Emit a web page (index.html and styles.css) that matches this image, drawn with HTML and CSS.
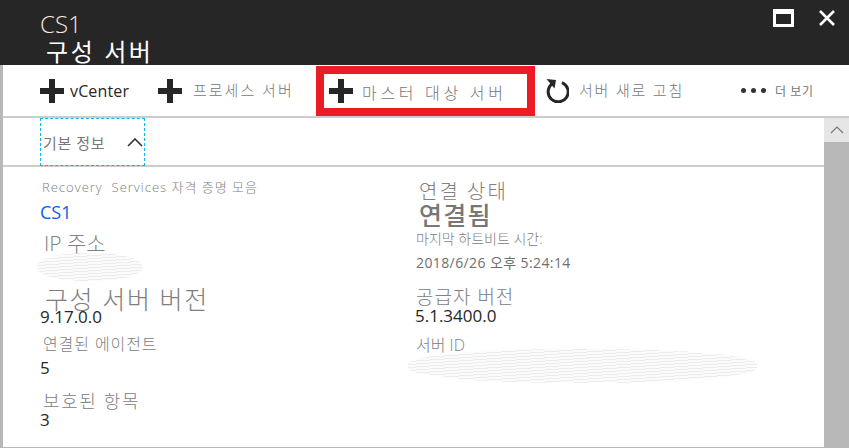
FILE: index.html
```html
<!DOCTYPE html>
<html lang="ko">
<head>
  <meta charset="UTF-8">
  <title>CS1 구성 서버</title>
  <link rel="stylesheet" href="styles.css">
</head>
<body>

  <div class="blade">
    <header class="blade-header">
      <div class="titles">
        <div class="title">CS1</div>
        <div class="subtitle">구성 서버</div>
      </div>
      <div class="window-buttons">
        <span class="btn-max"></span>
        <svg class="btn-close" width="18" height="18" viewBox="0 0 18 18">
          <path d="M2 2 L16 16 M16 2 L2 16" stroke="#fff" stroke-width="2.6" fill="none"/>
        </svg>
      </div>
    </header>

    <nav class="toolbar">
      <div class="tool tool-vcenter">
        <svg class="plus" width="24" height="24" viewBox="0 0 24 24"><path d="M9 0h6v9h9v6h-9v9H9v-9H0V9h9z" fill="#262626"/></svg>
        <span class="tool-en">vCenter</span>
      </div>
      <div class="tool tool-process">
        <svg class="plus" width="24" height="24" viewBox="0 0 24 24"><path d="M9 0h6v9h9v6h-9v9H9v-9H0V9h9z" fill="#262626"/></svg>
        <span class="tool-label">프로세스 서버</span>
      </div>
      <div class="tool tool-master">
        <svg class="plus" width="24" height="24" viewBox="0 0 24 24"><path d="M9 0h6v9h9v6h-9v9H9v-9H0V9h9z" fill="#262626"/></svg>
        <span class="tool-label wide">마스터 대상 서버</span>
      </div>
      <div class="tool tool-refresh">
        <svg width="24" height="24" viewBox="0 0 24 24">
          <path d="M7.5 4.6 A10 10 0 1 0 17 3.6" stroke="#262626" stroke-width="3" fill="none"/>
          <path d="M1.5 0 L11 1 L9.5 9.5 z" fill="#262626"/>
        </svg>
        <span class="tool-label">서버 새로 고침</span>
      </div>
      <div class="tool tool-more">
        <span class="dots"><i></i><i></i><i></i></span>
        <span class="more-label">더 보기</span>
      </div>
    </nav>

    <div class="content">
      <main class="panel">
        <div class="section-head">
          <div class="section-toggle">
            <span>기본 정보</span>
            <svg width="16" height="9" viewBox="0 0 16 9"><path d="M1 8 L8 1 L15 8" stroke="#333" stroke-width="1.6" fill="none"/></svg>
          </div>
        </div>

        <div class="essentials">
          <div class="col col-left">
            <div class="label small-latin">Recovery&nbsp; Services 자격 증명 모음</div>
            <a class="link" href="#">CS1</a>
            <div class="label ip">IP 주소</div>
            <div class="blur blur-ip"></div>
            <div class="label big">구성 서버 버전</div>
            <div class="value version">9.17.0.0</div>
            <div class="label agents">연결된 에이전트</div>
            <div class="value agents-val">5</div>
            <div class="label items">보호된 항목</div>
            <div class="value items-val">3</div>
          </div>
          <div class="col col-right">
            <div class="label status">연결 상태</div>
            <div class="status-val">연결됨</div>
            <div class="label heartbeat">마지막 하트비트 시간:</div>
            <div class="date">2018/6/26 오후 5:24:14</div>
            <div class="label provider">공급자 버전</div>
            <div class="value provider-val">5.1.3400.0</div>
            <div class="label server-id">서버 ID</div>
            <div class="blur blur-id"></div>
          </div>
        </div>
      </main>

      <aside class="scrollbar">
        <div class="scroll-up">
          <svg width="14" height="8" viewBox="0 0 14 8"><path d="M1 7 L7 1 L13 7" stroke="#777" stroke-width="1.2" fill="none"/></svg>
        </div>
        <div class="scroll-thumb"></div>
      </aside>
    </div>
  </div>

</body>
</html>
```

FILE: styles.css
```css
* {
  box-sizing: border-box;
}

html,
body {
  margin: 0;
  height: 448px;
  overflow: hidden;
  background: #fff;
}

body {
  font-family: "Open Sans", "Noto Sans CJK KR", sans-serif;
}

.blade {
  display: flex;
  flex-direction: column;
  height: 448px;
  border-left: 3px solid #b8b8b8;
  border-bottom: 1px solid #b8b8b8;
}

.blade-header {
  display: flex;
  justify-content: space-between;
  height: 65px;
  background: #262626;
  margin-left: -3px;
  padding-left: 40px;
}

.title {
  color: #f4e9d8;
  font-size: 24px;
  line-height: 30px;
  margin-top: 9px;
  font-weight: 300;
}

.subtitle {
  color: #fff;
  font-size: 24px;
  line-height: 26px;
  margin-left: 6px;
  letter-spacing: 2.6px;
}

.window-buttons {
  display: flex;
  align-items: center;
  gap: 24px;
  padding: 0 13px 30px 0;
}

.btn-max {
  width: 21px;
  height: 18px;
  border: 3px solid #fff;
  border-top-width: 5px;
}

.toolbar {
  display: flex;
  height: 53px;
  border-bottom: 2px solid #ccc;
  padding-left: 37px;
}

.tool {
  display: flex;
  align-items: center;
  color: #777;
}

.tool-vcenter {
  width: 118px;
  gap: 6px;
}

.tool-en {
  color: #262626;
  font-size: 16px;
  letter-spacing: 0.15px;
}

.tool-process {
  width: 158px;
  gap: 11px;
}

.tool-process .tool-label {
  margin-bottom: 3px;
  letter-spacing: 2px;
}

.tool-master {
  width: 219px;
  height: 50px;
  margin-top: 1px;
  border: 8px solid #ed1c24;
  padding-left: 5px;
  gap: 9px;
}

.tool-refresh {
  width: 196px;
  margin-left: 10px;
  gap: 10px;
}

.tool-refresh .tool-label {
  margin-bottom: 2px;
}

.tool-label {
  font-size: 15px;
  letter-spacing: 1.8px;
  font-weight: 300;
}

.tool-label.wide {
  letter-spacing: 3.7px;
  font-size: 16px;
  margin-top: 1px;
}

.dots {
  display: flex;
  gap: 5px;
  margin-right: 9px;
}

.dots i {
  width: 5px;
  height: 5px;
  border-radius: 50%;
  background: #333;
}

.more-label {
  font-size: 12px;
  letter-spacing: 0.6px;
}

.content {
  display: flex;
  flex: 1;
  min-height: 0;
}

.panel {
  flex: 1;
}

.section-head {
  height: 49px;
  border-bottom: 2px solid #ccc;
  padding-left: 37px;
}

.section-toggle {
  display: flex;
  align-items: center;
  justify-content: space-between;
  width: 105px;
  height: 48px;
  border: 1px dashed #12b5ea;
  padding: 0 1px 0 2px;
  color: #777;
  font-size: 15px;
  letter-spacing: 0.6px;
}

.essentials {
  display: flex;
  padding-left: 37px;
}

.col-left {
  width: 375px;
}

.label {
  color: #808080;
  font-weight: 300;
}

.small-latin {
  font-size: 13px;
  line-height: 16px;
  margin: 12px 0 0 2px;
  letter-spacing: 1px;
}

.link {
  display: block;
  color: #0a62d8;
  font-size: 18px;
  line-height: 22px;
  margin-top: 6px;
  text-decoration: none;
}

.ip {
  font-size: 21px;
  line-height: 24px;
  margin: 8px 0 0 4px;
}

.blur {
  border-radius: 45%;
  background: repeating-linear-gradient(176deg, #ececec 0 1px, #fbfbfb 1px 3px);
}

.blur-ip {
  width: 105px;
  height: 28px;
  margin: -2px 0 0 -3px;
}

.big {
  font-size: 25px;
  line-height: 32px;
  margin: 2px 0 0 5px;
  letter-spacing: 1.6px;
}

.value {
  color: #262626;
  font-size: 17px;
  line-height: 20px;
}

.version {
  margin-top: -8px;
}

.agents {
  font-size: 16px;
  line-height: 22px;
  margin: 6px 0 0 3px;
  letter-spacing: 0.9px;
}

.agents-val {
  margin-top: 3px;
}

.items {
  font-size: 18px;
  line-height: 24px;
  margin: 11px 0 0 3px;
  letter-spacing: 1.6px;
}

.items-val {
  margin-top: -3px;
}

.status {
  font-size: 20px;
  line-height: 24px;
  margin-top: 13px;
  margin-left: 4px;
  letter-spacing: 2px;
}

.status-val {
  color: #777;
  font-size: 25px;
  font-weight: 500;
  line-height: 24px;
  margin: -1px 0 0 4px;
  letter-spacing: 1.2px;
}

.heartbeat {
  font-size: 14px;
  line-height: 18px;
  margin-top: 3px;
  margin-left: 1px;
}

.date {
  color: #6e6e6e;
  font-size: 14px;
  line-height: 18px;
  margin: 6px 0 0 1px;
  letter-spacing: 0.4px;
}

.provider {
  font-size: 19px;
  line-height: 24px;
  margin: 13px 0 0 1px;
  letter-spacing: 1px;
}

.provider-val {
  margin-top: -3px;
}

.server-id {
  font-size: 16px;
  line-height: 20px;
  margin: 9px 0 0 1px;
}

.blur-id {
  width: 349px;
  height: 34px;
  margin: -6px 0 0 -7px;
}

.scrollbar {
  display: flex;
  flex-direction: column;
  width: 25px;
}

.scroll-up {
  display: flex;
  align-items: center;
  justify-content: center;
  height: 24px;
  background: #e6e6e6;
}

.scroll-thumb {
  flex: 1;
  background: #b8b8b8;
}
```
